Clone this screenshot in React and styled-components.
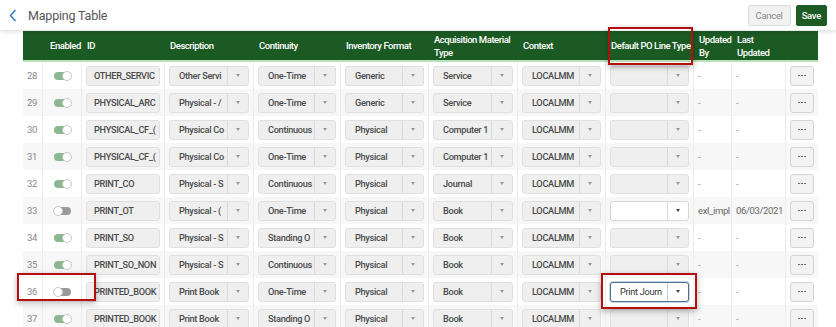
import React from 'react';
import styled, {createGlobalStyle} from 'styled-components';

const GlobalStyle = createGlobalStyle`
    body {
        margin: 0;
        background: #fff;
        font-family: Roboto, "Liberation Sans", sans-serif;
        overflow: hidden;
    }
`;

const COLS = '19px 39px 83px 89px 87px 88px 89px 88px 88px 38px 54px 33px';

const Page = styled.div`
    position: relative;
    width: 836px;
    height: 327px;
    overflow: hidden;
`;

const TopBar = styled.div`
    display: flex;
    align-items: center;
    height: 30px;
    padding: 0 9px 0 9px;
    background: #fff;
    box-shadow: 0 2px 4px rgba(0,0,0,0.12);
    position: relative;
    z-index: 2;
`;

const Back = styled.div`
    display: flex;
    align-items: center;
    color: #2a78b8;
    margin-right: 11px;
`;

const Title = styled.div`
    flex: 1;
    font-size: 12.5px;
    color: #555;
    letter-spacing: -0.2px;
`;

const Button = styled.div`
    display: flex;
    align-items: center;
    justify-content: center;
    height: 19px;
    padding: 0 ${props => props.primary ? '5px' : '7px'};
    margin-left: 5px;
    border-radius: 2px;
    font-size: 9.5px;
    letter-spacing: -0.3px;
    font-weight: ${props => props.primary ? 500 : 400};
    color: ${props => props.primary ? '#fff' : '#888'};
    background: ${props => props.primary ? '#1d5a24' : '#f1f1f1'};
    border: 1px solid ${props => props.primary ? '#1d5a24' : '#dcdcdc'};
`;

const Table = styled.div`
    margin: 1px 0 0 23px;
    width: 795px;
`;

const HeadRow = styled.div`
    display: grid;
    grid-template-columns: ${COLS};
    height: 29px;
    background: #1c5a23;
    border-bottom: 2px solid #b9dfbb;
`;

const HeadCell = styled.div`
    display: flex;
    align-items: center;
    padding-left: ${props => props.pad || 6}px;
    color: #fff;
    font-size: 9.5px;
    font-weight: 500;
    letter-spacing: -0.45px;
    line-height: 13px;
    white-space: nowrap;
`;

const Row = styled.div`
    display: grid;
    grid-template-columns: ${COLS};
    height: 27px;
    background: ${props => props.odd ? '#f7f7f7' : '#fff'};
`;

const Cell = styled.div`
    display: flex;
    align-items: center;
    padding: 0 4px;
    border-left: ${props => props.first ? 'none' : '1px solid #ececec'};
    overflow: hidden;
    font-size: 9.5px;
    color: ${props => props.muted ? '#999' : '#666'};
    letter-spacing: -0.35px;
    white-space: nowrap;
`;

const Num = styled.div`
    color: #888;
    font-size: 9.5px;
`;

const Toggle = styled.div`
    position: relative;
    width: 17px;
    height: 8px;
    margin-left: 7px;
    border-radius: 5px;
    background: ${props => props.on ? '#8ab890' : '#9a9a9a'};
    &::after {
        content: '';
        position: absolute;
        top: -1px;
        ${props => props.on ? 'right: -1px;' : 'left: -1px;'}
        width: 8px;
        height: 8px;
        border-radius: 50%;
        background: #fff;
        border: 1px solid #c8c8c8;
    }
`;

const Field = styled.div`
    display: flex;
    align-items: stretch;
    width: 100%;
    height: 20px;
    box-sizing: border-box;
    border-radius: 3px;
    border: 1px solid ${props => props.active ? '#4f6e8c' : props.white ? '#d6d6d6' : '#e0e0e0'};
    background: ${props => props.active || props.white ? '#fff' : '#efefef'};
    box-shadow: ${props => props.active ? '0 0 0 1px #c9d7e4' : 'none'};
    overflow: hidden;
`;

const FieldText = styled.div`
    flex: 1;
    display: flex;
    align-items: center;
    padding-left: ${props => props.pad || 9}px;
    overflow: hidden;
    white-space: nowrap;
    font-size: 9.2px;
    letter-spacing: -0.3px;
    font-weight: ${props => props.normal ? 400 : 500};
    color: ${props => props.normal ? '#333' : '#4a4a4a'};
`;

const Caret = styled.div`
    width: 20px;
    flex: none;
    display: flex;
    align-items: center;
    justify-content: center;
    border-left: 1px solid ${props => props.active ? '#c5ced7' : '#dadada'};
    &::after {
        content: '';
        border-left: 2.5px solid transparent;
        border-right: 2.5px solid transparent;
        border-top: 3px solid ${props => props.dark ? '#444' : '#999'};
    }
`;

const More = styled.div`
    display: flex;
    align-items: center;
    justify-content: center;
    gap: 1.5px;
    width: 24px;
    height: 20px;
    box-sizing: border-box;
    border-radius: 3px;
    border: 1px solid #d4d4d4;
    background: #f3f3f3;
`;

const Dot = styled.span`
    width: 1.6px;
    height: 1.6px;
    border-radius: 50%;
    background: #555;
`;

const Highlight = styled.div`
    position: absolute;
    box-sizing: border-box;
    border: 2px solid #b30f0f;
    box-shadow: 0 2px 6px rgba(0,0,0,0.3);
    pointer-events: none;
    z-index: 3;
`;

const rows = [
    {n: 28, on: true, id: 'OTHER_SERVIC', desc: 'Other Servi', cont: 'One-Time', inv: 'Generic', acq: 'Service'},
    {n: 29, on: true, id: 'PHYSICAL_ARC', desc: 'Physical - /', cont: 'One-Time', inv: 'Generic', acq: 'Service'},
    {n: 30, on: true, id: 'PHYSICAL_CF_(', desc: 'Physical Co', cont: 'Continuous', inv: 'Physical', acq: 'Computer 1'},
    {n: 31, on: true, id: 'PHYSICAL_CF_(', desc: 'Physical Co', cont: 'One-Time', inv: 'Physical', acq: 'Computer 1'},
    {n: 32, on: true, id: 'PRINT_CO', desc: 'Physical - S', cont: 'Continuous', inv: 'Physical', acq: 'Journal'},
    {n: 33, on: false, id: 'PRINT_OT', desc: 'Physical - (', cont: 'One-Time', inv: 'Physical', acq: 'Book', white: true, by: 'exl_impl', date: '06/03/2021'},
    {n: 34, on: true, id: 'PRINT_SO', desc: 'Physical - S', cont: 'Standing O', inv: 'Physical', acq: 'Book'},
    {n: 35, on: true, id: 'PRINT_SO_NON', desc: 'Physical - S', cont: 'Continuous', inv: 'Physical', acq: 'Book'},
    {n: 36, on: false, id: 'PRINTED_BOOK', desc: 'Print Book', cont: 'One-Time', inv: 'Physical', acq: 'Book', po: 'Print Journ'},
    {n: 37, on: true, id: 'PRINTED_BOOK', desc: 'Print Book', cont: 'Standing O', inv: 'Physical', acq: 'Book'},
];

const Select = ({value}) => (
    <Field>
        <FieldText>{value}</FieldText>
        <Caret/>
    </Field>
);

const PoSelect = ({row}) => {
    if (row.po) {
        return (
            <Field active>
                <FieldText normal>{row.po}</FieldText>
                <Caret active dark/>
            </Field>
        );
    }
    return (
        <Field white={row.white}>
            <FieldText/>
            <Caret dark={row.white}/>
        </Field>
    );
};

const App = () => (
    <Page>
        <GlobalStyle/>
        <TopBar>
            <Back>
                <svg width="8" height="13" viewBox="0 0 8 13" fill="none">
                    <path d="M6.5 1 L1.5 6.5 L6.5 12" stroke="currentColor" strokeWidth="1.4"/>
                </svg>
            </Back>
            <Title>Mapping Table</Title>
            <Button>Cancel</Button>
            <Button primary>Save</Button>
        </TopBar>
        <Table>
            <HeadRow>
                <HeadCell/>
                <HeadCell pad={8}>Enabled</HeadCell>
                <HeadCell>ID</HeadCell>
                <HeadCell>Description</HeadCell>
                <HeadCell>Continuity</HeadCell>
                <HeadCell>Inventory Format</HeadCell>
                <HeadCell>Acquisition Material<br/>Type</HeadCell>
                <HeadCell>Context</HeadCell>
                <HeadCell>Default PO Line Type</HeadCell>
                <HeadCell>Updated<br/>By</HeadCell>
                <HeadCell>Last<br/>Updated</HeadCell>
                <HeadCell/>
            </HeadRow>
            {rows.map(row => (
                <Row key={row.n} odd={row.n % 2 === 1}>
                    <Cell first><Num>{row.n}</Num></Cell>
                    <Cell><Toggle on={row.on}/></Cell>
                    <Cell>
                        <Field><FieldText pad={7}>{row.id}</FieldText></Field>
                    </Cell>
                    <Cell><Select value={row.desc}/></Cell>
                    <Cell><Select value={row.cont}/></Cell>
                    <Cell><Select value={row.inv}/></Cell>
                    <Cell><Select value={row.acq}/></Cell>
                    <Cell><Select value="LOCALMM"/></Cell>
                    <Cell><PoSelect row={row}/></Cell>
                    <Cell muted={!row.by}>{row.by || '-'}</Cell>
                    <Cell muted={!row.date}>{row.date || '-'}</Cell>
                    <Cell><More><Dot/><Dot/><Dot/></More></Cell>
                </Row>
            ))}
        </Table>
        <Highlight style={{left: 608, top: 27, width: 85, height: 38}}/>
        <Highlight style={{left: 17, top: 273, width: 79, height: 28}}/>
        <Highlight style={{left: 601, top: 273, width: 96, height: 36}}/>
    </Page>
);

export default App;
